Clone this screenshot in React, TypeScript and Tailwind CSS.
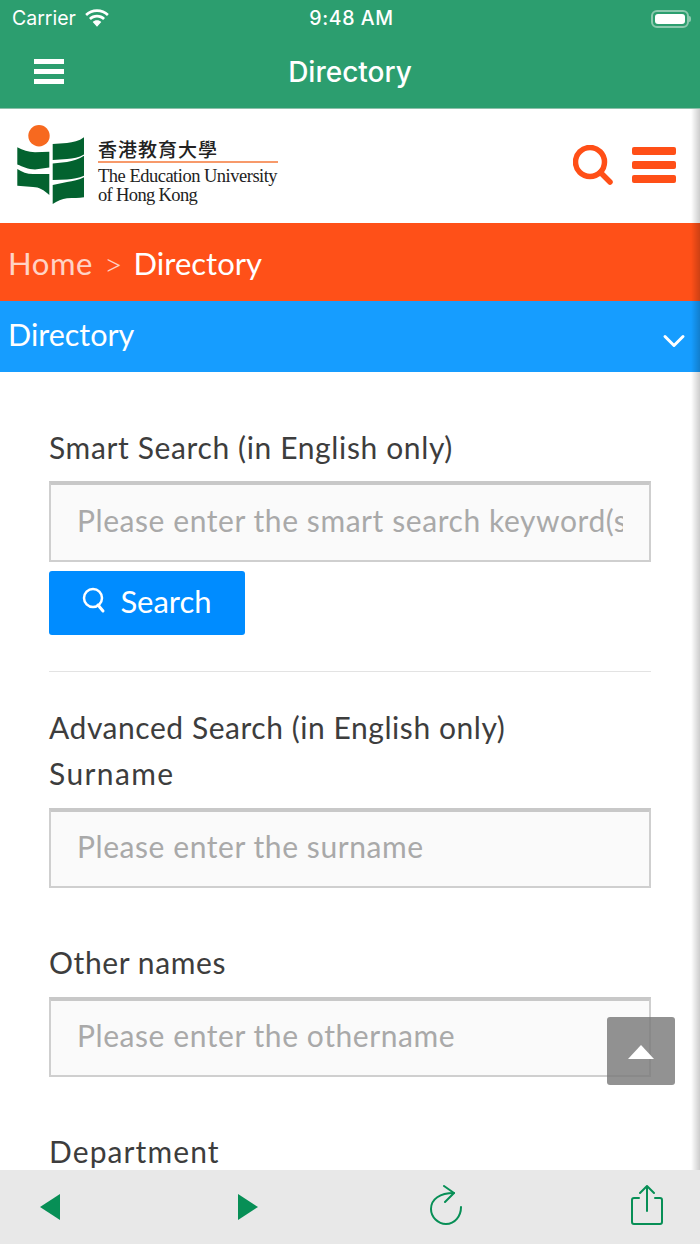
import { ChevronDown } from "lucide-react";

const SANS = "font-['Lato','Open_Sans',sans-serif]";

function Wifi() {
  return (
    <svg width="26" height="20" viewBox="0 0 26 20" fill="#fff">
      <path d="M13 3c3.900 0 7.400 1.500 10 4l1.800-2C21.700 2 17.600 0.200 13 0.200S4.300 2 1.200 5L3 7c2.600-2.500 6.100-4 10-4z" />
      <path d="M13 8.500c2.400 0 4.500.9 6.100 2.400l1.900-2c-2.100-2-4.900-3.200-8-3.200s-5.900 1.200-8 3.200l1.900 2C8.500 9.400 10.600 8.500 13 8.500z" />
      <path d="M13 11.200c-1.700 0-3.200.7-4.300 1.700L13 17.800l4.300-4.900c-1.100-1-2.600-1.700-4.300-1.700z" />
    </svg>
  );
}

function Logo() {
  return (
    <div className="flex items-start">
      <svg width="68" height="80" viewBox="0 0 68 80">
        <circle cx="22" cy="10.700" r="10.700" fill="#F7691F" />
        <g fill="#03622F">
          <path d="M0.300 22.300C6 25 11 27 18 27.300L32.300 26.700V42.500L18 44.500C11 44.500 6 41.500 0.300 39.500z" />
          <path d="M0.300 44C5 47 10 49 16 49L32.300 49V70C27 65 22 62 16 62L0.300 60.700z" />
          <path d="M35.700 19L50 18C56 17.500 62 16 67 12.300V29.500C62 32.500 56 33.500 50 34L35.700 35z" />
          <path d="M35.700 38.500L50 37C56 36 62 34 67 30.700V50.700C62 53 56 54 50 54.500L35.700 55z" />
          <path d="M35.700 60L50 57C56 56 62 55 67 52.300V72.300C62 73 56 73 50 73.300C45 74 40 76 35.700 79z" />
        </g>
      </svg>
      <div className="ml-[13px] mt-[11px] w-[180px] font-['Liberation_Serif',serif] text-[#222]">
        <div className="text-[19px] leading-[25px] tracking-[1px] font-['Noto_Sans_CJK_TC',sans-serif] font-medium">
          香港教育大學
        </div>
        <div className="h-[2px] bg-[#F79A6B]" />
        <div className="mt-[3px] text-[18.5px] leading-[20px] tracking-[-0.5px] whitespace-nowrap">
          The Education University
        </div>
        <div className="-mt-[1px] text-[18.5px] leading-[20px] tracking-[-0.65px]">of Hong Kong</div>
      </div>
    </div>
  );
}

function Field({ label, placeholder, labelClass }: { label: string; placeholder: string; labelClass: string }) {
  return (
    <div>
      <div className={`text-[30px] leading-[46px] text-[#3d3d3d] whitespace-nowrap ${labelClass}`}>{label}</div>
      <div className="mt-[12px] h-[80px] bg-[#fafafa] border-2 border-[#cfcfcf] border-t-[4px] border-t-[#c8c8c8] px-[26px] pb-[6px] flex items-center overflow-hidden">
        <span className="min-w-0 text-[30px] tracking-[0.57px] text-[#a9a9a9] whitespace-nowrap overflow-hidden">{placeholder}</span>
      </div>
    </div>
  );
}

export default function App() {
  return (
    <div className={`relative w-[700px] h-[1244px] flex flex-col overflow-hidden bg-white ${SANS}`}>
      {/* status + nav */}
      <header className="h-[109px] bg-[#2C9E6F] border-b border-[#8dbfaa] text-white font-['Inter',sans-serif] shrink-0">
        <div className="h-[35px] grid grid-cols-3 items-center pl-[12px] pr-[9px] pt-[2px] text-[19.5px]">
          <div className="flex items-center gap-[8px]">
            <span>Carrier</span>
            <Wifi />
          </div>
          <span className="text-center font-medium tracking-[0.6px] whitespace-nowrap">9:48 AM</span>
          <div className="flex items-center justify-end">
            <div className="w-[38px] h-[18px] rounded-[6px] border-2 border-[#8cc9ae] p-[2px]">
              <div className="w-full h-full rounded-[3px] bg-white" />
            </div>
            <div className="w-[2px] h-[6px] bg-[#8cc9ae] rounded-r" />
          </div>
        </div>
        <div className="flex items-center h-[73px] relative pl-[34px]">
          <div className="flex flex-col gap-[5px] w-[30px]">
            <div className="h-[5px] bg-white" />
            <div className="h-[5px] bg-white" />
            <div className="h-[5px] bg-white" />
          </div>
          <div className="flex-1 text-center pr-[64px] text-[28px] font-medium">Directory</div>
        </div>
      </header>

      {/* site header */}
      <div className="h-[114px] shrink-0 flex items-center justify-between pl-[17px] pr-[24px] pb-[2px]">
        <Logo />
        <div className="flex items-center gap-[19px]">
          <svg width="40" height="40" viewBox="0 0 40 40" fill="none" stroke="#FF4F17" strokeLinecap="round">
            <circle cx="17" cy="17" r="14.500" strokeWidth="5.500" />
            <path d="M27.500 27.500l9.500 9.500" strokeWidth="5.500" />
          </svg>
          <div className="flex flex-col gap-[6px] w-[44px]">
            <div className="h-[8px] rounded-[2px] bg-[#FF4F17]" />
            <div className="h-[8px] rounded-[2px] bg-[#FF4F17]" />
            <div className="h-[8px] rounded-[2px] bg-[#FF4F17]" />
          </div>
        </div>
      </div>

      {/* breadcrumb */}
      <div className="h-[78px] shrink-0 bg-[#FF5018] flex items-center pl-[8px] pt-[3px] text-[31px] text-white">
        <span className="opacity-75 tracking-[0.6px]">Home</span>
        <span className="ml-[11px] mr-[11px] opacity-75 text-[32px] font-light">&gt;</span>
        <span>Directory</span>
      </div>

      {/* section bar */}
      <div className="h-[71px] shrink-0 bg-[#169DFF] flex items-center justify-between pl-[8px] pr-[8px] pb-[4px] text-[30.5px] text-white">
        <span>Directory</span>
        <ChevronDown size={36} strokeWidth={2} className="mt-[12px]" />
      </div>

      {/* form */}
      <main className="flex-1 overflow-hidden px-[49px] pt-[53px]">
        <div className="-mt-[1px] text-[30px] leading-[46px] tracking-[0.63px] text-[#3d3d3d] whitespace-nowrap">Smart Search (in English only)</div>
        <div className="mt-[11px] h-[81px] bg-[#fafafa] border-2 border-[#cfcfcf] border-t-[4px] border-t-[#c8c8c8] pl-[26px] pr-[26px] pb-[4px] flex items-center">
          <span className="min-w-0 text-[30px] tracking-[0.57px] text-[#a9a9a9] whitespace-nowrap overflow-hidden">Please enter the smart search keyword(s)</span>
        </div>
        <button className="mt-[9px] w-[196px] h-[64px] rounded-[3px] bg-[#008CFF] text-white flex items-center justify-center gap-[14px] pb-[4px] text-[31px]">
          <svg width="24" height="28" viewBox="0 0 24 28" fill="none" stroke="#fff" strokeLinecap="round">
            <circle cx="11" cy="11" r="9" strokeWidth="2.500" />
            <path d="M16 18l5 6" strokeWidth="3" />
          </svg>
          Search
        </button>
        <div className="mt-[36px] h-[1px] bg-[#e3e3e3]" />
        <div className="mt-[32px] text-[30px] leading-[46px] tracking-[0.55px] text-[#3d3d3d] whitespace-nowrap">Advanced Search (in English only)</div>
        <Field label="Surname" placeholder="Please enter the surname" labelClass="tracking-[1.4px]" />
        <div className="mt-[51px]">
          <Field label="Other names" placeholder="Please enter the othername" labelClass="tracking-[0.6px]" />
        </div>
        <div className="mt-[51px] text-[30px] leading-[46px] tracking-[1.1px] text-[#3d3d3d] whitespace-nowrap">Department</div>
      </main>

      {/* toolbar */}
      <footer className="h-[74px] shrink-0 bg-[#E8E8E8] flex items-center pl-[40px]">
        <svg width="20" height="26" viewBox="0 0 20 26" className="mb-[1px]"><path d="M20 0v26L0 13z" fill="#078F56" /></svg>
        <svg width="20" height="26" viewBox="0 0 20 26" className="ml-[178px] mb-[1px]"><path d="M0 0v26l20-13z" fill="#078F56" /></svg>
        <svg width="32" height="40" viewBox="0 0 32 40" fill="none" stroke="#078F56" strokeWidth="2" strokeLinecap="round" strokeLinejoin="round" className="ml-[172px] mb-[5px]">
          <path d="M24 8C10 8 1 14 1 24C1 32 8 39 16 39C25 39 31 31 31 22" />
          <path d="M14 1l10 7-9 9" />
        </svg>
        <svg width="32" height="41" viewBox="0 0 32 41" fill="none" stroke="#078F56" strokeWidth="2" strokeLinecap="round" strokeLinejoin="round" className="ml-[169px] mb-[4px]">
          <path d="M8 13H3a2 2 0 0 0-2 2v22a2 2 0 0 0 2 2h26a2 2 0 0 0 2-2V15a2 2 0 0 0-2-2h-5" />
          <path d="M16 26V1M9 8l7-7 7 7" />
        </svg>
      </footer>

      {/* web view edge shadow */}
      <div className="absolute right-0 top-[109px] bottom-[74px] w-[9px] bg-gradient-to-r from-transparent to-black/20" />

      {/* back to top */}
      <button className="absolute left-[607px] top-[1017px] w-[68px] h-[68px] rounded-[3px] bg-[#777777]/80 flex items-center justify-center">
        <svg width="26" height="14" viewBox="0 0 26 14" className="mt-[1px]"><path d="M13 0l13 14H0z" fill="#fff" /></svg>
      </button>
    </div>
  );
}
